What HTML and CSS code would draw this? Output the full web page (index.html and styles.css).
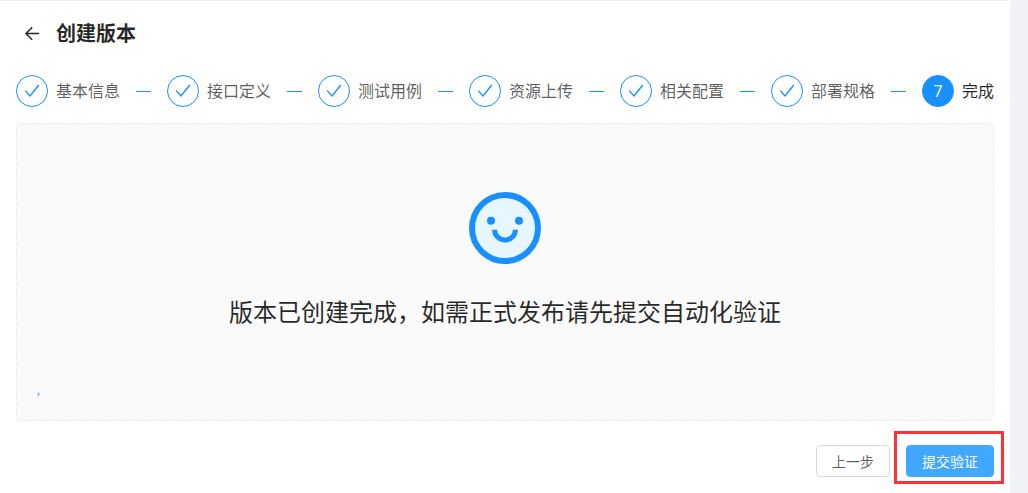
FILE: index.html
```html
<!DOCTYPE html>
<html lang="zh-CN">
<head>
    <meta charset="UTF-8">
    <meta name="viewport" content="width=device-width, initial-scale=1.0">
    <title>创建版本</title>
    <link rel="stylesheet" href="styles.css">
</head>
<body>

    <main class="page">
        <header class="page-header">
            <button class="back" type="button" aria-label="返回">
                <svg viewBox="0 0 16 16" width="16" height="16" fill="none" stroke="currentColor" stroke-width="1.5">
                    <path d="M15 7.5H2M8.2 1.3L2 7.5l6.2 6.2"/>
                </svg>
            </button>
            <h1>创建版本</h1>
        </header>

        <ol class="steps">
            <li class="step">
                <span class="step-icon"><svg viewBox="0 0 16 16" width="16" height="16"><path d="M1.2 7.6L6 13L14.8 2"/></svg></span>
                <span class="step-title">基本信息</span>
            </li>
            <li class="step">
                <span class="step-icon"><svg viewBox="0 0 16 16" width="16" height="16"><path d="M1.2 7.6L6 13L14.8 2"/></svg></span>
                <span class="step-title">接口定义</span>
            </li>
            <li class="step">
                <span class="step-icon"><svg viewBox="0 0 16 16" width="16" height="16"><path d="M1.2 7.6L6 13L14.8 2"/></svg></span>
                <span class="step-title">测试用例</span>
            </li>
            <li class="step">
                <span class="step-icon"><svg viewBox="0 0 16 16" width="16" height="16"><path d="M1.2 7.6L6 13L14.8 2"/></svg></span>
                <span class="step-title">资源上传</span>
            </li>
            <li class="step">
                <span class="step-icon"><svg viewBox="0 0 16 16" width="16" height="16"><path d="M1.2 7.6L6 13L14.8 2"/></svg></span>
                <span class="step-title">相关配置</span>
            </li>
            <li class="step">
                <span class="step-icon"><svg viewBox="0 0 16 16" width="16" height="16"><path d="M1.2 7.6L6 13L14.8 2"/></svg></span>
                <span class="step-title">部署规格</span>
            </li>
            <li class="step active" aria-current="step">
                <span class="step-icon">7</span>
                <span class="step-title">完成</span>
            </li>
        </ol>

        <section class="content">
            <div class="result">
                <svg class="smile" viewBox="0 0 72 72" width="72" height="72">
                    <circle cx="36" cy="36" r="33" fill="#e6f7ff" stroke="#1890ff" stroke-width="6"/>
                    <circle cx="22" cy="28.7" r="4" fill="#1890ff"/>
                    <circle cx="50" cy="28.7" r="4" fill="#1890ff"/>
                    <path d="M25.6 37.7a10.4 10.4 0 0 0 20.8 0" fill="none" stroke="#1890ff" stroke-width="5"/>
                </svg>
                <p class="result-title">版本已创建完成，如需正式发布请先提交自动化验证</p>
            </div>
            <div class="note">,</div>
        </section>

        <footer class="actions">
            <button class="btn" type="button">上一步</button>
            <div class="marked">
                <button class="btn primary" type="button">提交验证</button>
            </div>
        </footer>
    </main>

</body>
</html>
```

FILE: styles.css
```css
* {
    box-sizing: border-box;
}

body {
    margin: 0;
    padding-right: 18px;
    min-height: 100vh;
    background-color: #f0f2f5;
    font-family: "Open Sans", "Noto Sans CJK SC", sans-serif;
    font-size: 14px;
    color: rgba(0, 0, 0, 0.85);
}

.page {
    min-height: 100vh;
    padding: 16px;
    background-color: #fff;
    border-top: 1px solid #f0f2f5;
}

.page-header {
    display: flex;
    align-items: center;
    gap: 16px;
    padding-left: 8px;
    margin-bottom: 24px;
}

.page-header h1 {
    margin: 0;
    font-size: 20px;
    line-height: 34px;
    font-weight: 700;
}

.back {
    display: flex;
    padding: 0;
    border: none;
    background: none;
    color: inherit;
    cursor: pointer;
}

.steps {
    display: flex;
    margin: 0 0 16px;
    padding: 0;
    list-style: none;
}

.step {
    display: flex;
    flex: 1 1 auto;
    align-items: center;
    gap: 8px;
    font-size: 16px;
    line-height: 32px;
    color: rgba(0, 0, 0, 0.65);
    white-space: nowrap;
}

/* connector to the next step */
.step:not(:last-child)::after {
    content: "";
    flex: 1;
    height: 1px;
    margin: 0 16px 0 8px;
    background-color: #1890ff;
}

.step-icon {
    display: flex;
    align-items: center;
    justify-content: center;
    width: 32px;
    height: 32px;
    border: 1px solid #1890ff;
    border-radius: 50%;
}

.step-icon path {
    fill: none;
    stroke: #1890ff;
    stroke-width: 1.4;
}

.step.active {
    flex: none;
    color: rgba(0, 0, 0, 0.85);
}

.step.active .step-icon {
    background-color: #1890ff;
    color: #fff;
}

.content {
    padding: 20px;
    background-color: #fafafa;
    border: 1px dashed #e9e9e9;
    border-radius: 6px;
}

.result {
    padding: 48px 32px;
    text-align: center;
}

.smile {
    display: block;
    margin: 0 auto 28px;
}

.result-title {
    margin: 0;
    font-size: 24px;
    line-height: 40px;
}

.note {
    font-size: 12px;
    line-height: 20px;
    color: #1890ff;
}

.actions {
    display: flex;
    justify-content: flex-end;
    gap: 16px;
    margin-top: 24px;
}

.btn {
    height: 32px;
    padding: 0 15px;
    border: 1px solid #d9d9d9;
    border-radius: 4px;
    background-color: #fff;
    box-shadow: 0 2px 0 rgba(0, 0, 0, 0.02);
    color: rgba(0, 0, 0, 0.65);
    font-family: inherit;
    font-size: 14px;
    cursor: pointer;
}

.btn.primary {
    border-color: #40a9ff;
    background-color: #40a9ff;
    color: #fff;
}

.marked {
    position: relative;
}

.marked::after {
    content: "";
    position: absolute;
    inset: -14px -10px -7px -12px;
    border: 3px solid #f8333c;
    pointer-events: none;
}
```
